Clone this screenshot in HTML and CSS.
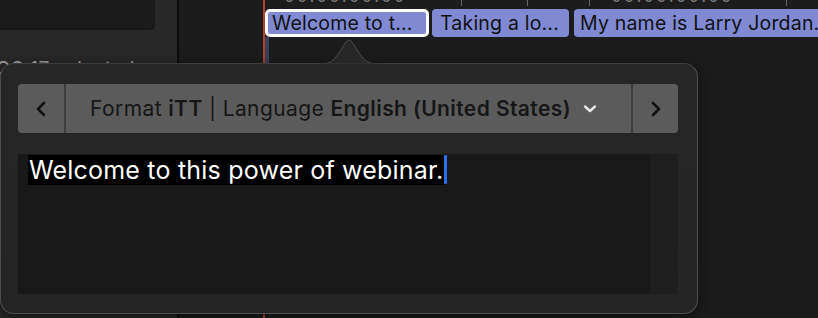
FILE: index.html
```html
<!DOCTYPE html>
<html lang="en">
  <head>
    <meta charset="UTF-8" />
    <title>Captions</title>
    <link rel="stylesheet" href="styles.css">
  </head>
  <body>
    <div class="stage">
      <div class="sidebar">
        <div class="sidebar-box"></div>
        <div class="sidebar-label">CC 17 selected</div>
      </div>
      <div class="timeline">
        <div class="ruler">
          <span class="tc tc-1">00:00:00:00</span>
          <span class="tick" style="left: 282px"></span>
          <span class="tick" style="left: 348px"></span>
          <span class="tick" style="left: 410px"></span>
          <span class="tc tc-2">00:00:00:00</span>
          <span class="tick" style="left: 607px"></span>
        </div>
        <div class="track">
          <div class="clip clip-selected" style="width: 164px">Welcome to t...</div>
          <div class="clip" style="width: 137px">Taking a lo...</div>
          <div class="clip clip-last">My name is Larry Jordan..</div>
        </div>
        <div class="playhead"></div>
        <div class="range"></div>
      </div>
    </div>

    <!-- caption editor popover -->
    <div class="popover">
      <svg class="popover-arrow" width="60" height="26" viewBox="0 0 60 26">
        <path d="M0 25 C12 25 14 22 20 14 L27 3 Q30 -1 33 3 L40 14 C46 22 48 25 60 25 Z" fill="#262626" stroke="#4a4a4a" stroke-width="1"/>
        <rect x="0" y="24.5" width="60" height="2" fill="#262626"/>
      </svg>
      <div class="toolbar">
        <button class="nav-btn">
          <svg width="12" height="16" viewBox="0 0 12 16"><path d="M9 2 L3 8 L9 14" fill="none" stroke="#111" stroke-width="2.6" stroke-linecap="round" stroke-linejoin="round"/></svg>
        </button>
        <div class="format">
          <span>Format <b>iTT</b> | Language <b>English (United States)</b></span>
          <svg class="chevron" width="14" height="10" viewBox="0 0 14 10"><path d="M2 2.5 L7 7 L12 2.5" fill="none" stroke="#e8e8e8" stroke-width="2.4" stroke-linecap="round" stroke-linejoin="round"/></svg>
        </div>
        <button class="nav-btn nav-next">
          <svg width="12" height="16" viewBox="0 0 12 16"><path d="M3 2 L9 8 L3 14" fill="none" stroke="#111" stroke-width="2.6" stroke-linecap="round" stroke-linejoin="round"/></svg>
        </button>
      </div>
      <div class="editor">
        <div class="editor-text">
          <span class="selected-text">Welcome to this power of webinar.</span><span class="caret"></span>
        </div>
        <div class="scroll-track"></div>
      </div>
    </div>
  </body>
</html>
```

FILE: styles.css
```css
* {
  margin: 0;
  padding: 0;
  box-sizing: border-box;
}

body {
  font-family: Inter, 'Noto Sans', sans-serif;
  background: #1c1c1c;
  width: 818px;
  height: 318px;
  overflow: hidden;
  position: relative;
}

.stage {
  display: flex;
  height: 318px;
}

.sidebar {
  width: 179px;
  background: #282828;
  border-right: 2px solid #0c0c0c;
  flex-shrink: 0;
}

.sidebar-box {
  width: 155px;
  height: 30px;
  background: #1b1b1b;
  border-bottom-right-radius: 5px;
  border-right: 1px solid #161616;
  border-bottom: 1px solid #161616;
}

.sidebar-label {
  margin-top: 27px;
  margin-left: -4px;
  color: #a0a0a0;
  font-size: 19px;
  letter-spacing: 0.4px;
  white-space: nowrap;
}

.timeline {
  flex: 1;
  position: relative;
  background: #1c1c1c;
}

.ruler {
  height: 9px;
  position: relative;
  overflow: hidden;
}

.tc {
  position: absolute;
  top: -14px;
  color: #777;
  font-size: 17px;
  letter-spacing: 2px;
}

.tc-1 { left: 105px; }
.tc-2 { left: 432px; }

.tick {
  position: absolute;
  top: 0;
  width: 1px;
  height: 6px;
  background: #666;
}

.track {
  display: flex;
  gap: 3px;
  padding-left: 86px;
}

.clip {
  height: 28px;
  background: #8089d2;
  color: #111;
  font-size: 19.5px;
  letter-spacing: 0.2px;
  line-height: 28px;
  padding-left: 8px;
  border-radius: 4px;
  white-space: nowrap;
  overflow: hidden;
  flex-shrink: 0;
}

.clip-selected {
  border: 3px solid #fff;
  line-height: 22px;
  padding-left: 4px;
  border-radius: 5px;
}

.clip-last {
  width: 260px;
  margin-left: 2px;
  padding-left: 6px;
}

.playhead {
  position: absolute;
  left: 84px;
  top: 0;
  width: 2px;
  height: 318px;
  background: #a8442c;
}

.range {
  position: absolute;
  left: 86px;
  top: 37px;
  width: 4px;
  height: 28px;
  background: #3a3f5c;
}

.popover {
  position: absolute;
  left: 0;
  top: 63px;
  width: 698px;
  height: 251px;
  background: linear-gradient(#262626, #242424);
  border: 1px solid #4e4e4e;
  border-top-color: #3c3c3c;
  border-radius: 14px;
  padding: 20px 19px 18px 17px;
  box-shadow: 0 4px 16px rgba(0,0,0,0.5);
}

.popover-arrow {
  position: absolute;
  left: 318px;
  top: -25px;
}

.toolbar {
  display: flex;
  height: 49px;
  background: #5b5b5b;
  border-radius: 4px;
}

.nav-btn {
  width: 46px;
  border: none;
  background: transparent;
  display: flex;
  align-items: center;
  justify-content: center;
}

.nav-next {
  width: 47px;
  border-left: 2px solid #3e3e3e;
}

.format {
  flex: 1;
  display: flex;
  align-items: center;
  justify-content: center;
  gap: 12px;
  border-left: 2px solid #3e3e3e;
  color: #161616;
  font-size: 21px;
  letter-spacing: 0.4px;
  padding-right: 10px;
}

.format b {
  font-weight: 600;
}

.chevron {
  margin-top: 1px;
}

.editor {
  display: flex;
  height: 140px;
  margin-top: 21px;
}

.editor-text {
  flex: 1;
  background: #181818;
  padding: 1px 0 0 10px;
}

.scroll-track {
  width: 28px;
  background: #1e1e1e;
}

.selected-text {
  background: #000;
  color: #fff;
  font-size: 25px;
  letter-spacing: 0.2px;
  line-height: 30px;
  display: inline-block;
  padding-left: 1px;
}

.caret {
  display: inline-block;
  width: 3px;
  height: 29px;
  background: #2e6ff0;
  border-radius: 1px;
  vertical-align: top;
}
```
